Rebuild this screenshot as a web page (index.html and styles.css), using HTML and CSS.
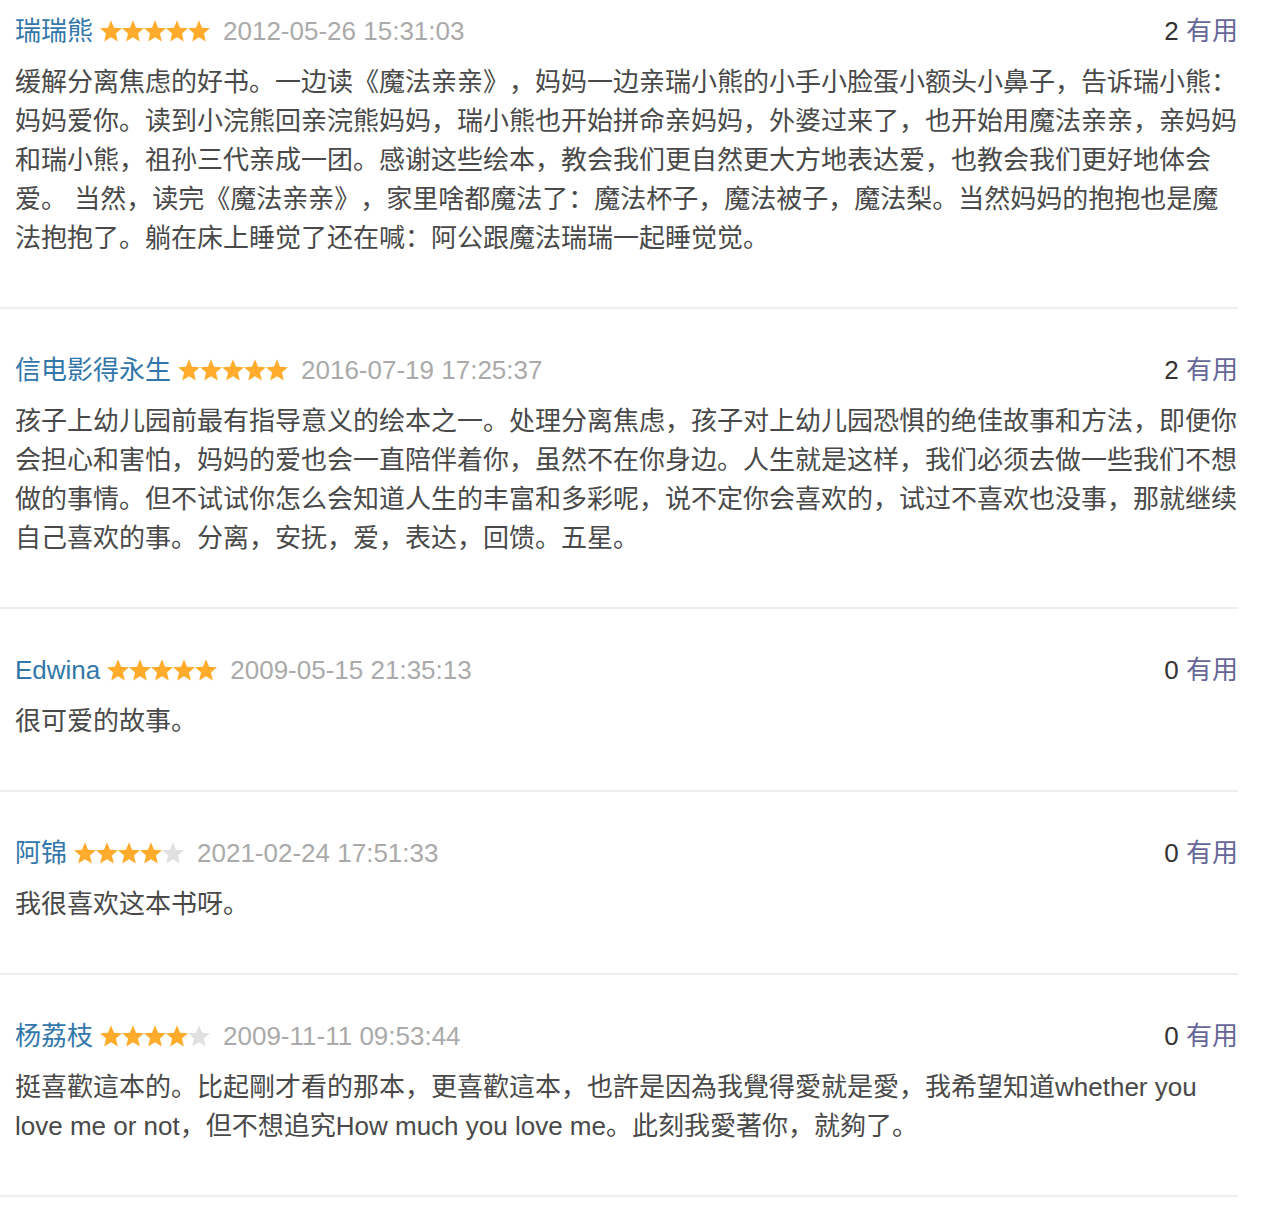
FILE: index.html
```html
<!DOCTYPE html>
<html lang="zh-CN">
<head>
<meta charset="utf-8">
<title>短评</title>
<link rel="stylesheet" href="styles.css">
</head>
<body>
<svg class="defs" width="0" height="0" aria-hidden="true">
  <defs>
    <polygon id="star" points="11,0.3 14.06,7.79 22,8.3 15.95,13.61 17.8,21.4 11,17.2 4.2,21.4 6.05,13.61 0,8.3 7.94,7.79"/>
  </defs>
</svg>
<div class="comments">
  <div class="comment">
    <div class="meta">
      <div class="who">
        <a class="name" href="#">瑞瑞熊</a>
        <span class="stars"><svg viewBox="0 0 22 22"><use href="#star"/></svg><svg viewBox="0 0 22 22"><use href="#star"/></svg><svg viewBox="0 0 22 22"><use href="#star"/></svg><svg viewBox="0 0 22 22"><use href="#star"/></svg><svg viewBox="0 0 22 22"><use href="#star"/></svg></span>
        <span class="time">2012-05-26 15:31:03</span>
      </div>
      <div class="vote"><span class="count">2</span> <a class="useful" href="#">有用</a></div>
    </div>
    <p class="text">缓解分离焦虑的好书。一边读《魔法亲亲》，妈妈一边亲瑞小熊的小手小脸蛋小额头小鼻子，告诉瑞小熊：妈妈爱你。读到小浣熊回亲浣熊妈妈，瑞小熊也开始拼命亲妈妈，外婆过来了，也开始用魔法亲亲，亲妈妈和瑞小熊，祖孙三代亲成一团。感谢这些绘本，教会我们更自然更大方地表达爱，也教会我们更好地体会爱。 当然，读完《魔法亲亲》，家里啥都魔法了：魔法杯子，魔法被子，魔法梨。当然妈妈的抱抱也是魔法抱抱了。躺在床上睡觉了还在喊：阿公跟魔法瑞瑞一起睡觉觉。</p>
  </div>

  <div class="comment">
    <div class="meta">
      <div class="who">
        <a class="name" href="#">信电影得永生</a>
        <span class="stars"><svg viewBox="0 0 22 22"><use href="#star"/></svg><svg viewBox="0 0 22 22"><use href="#star"/></svg><svg viewBox="0 0 22 22"><use href="#star"/></svg><svg viewBox="0 0 22 22"><use href="#star"/></svg><svg viewBox="0 0 22 22"><use href="#star"/></svg></span>
        <span class="time">2016-07-19 17:25:37</span>
      </div>
      <div class="vote"><span class="count">2</span> <a class="useful" href="#">有用</a></div>
    </div>
    <p class="text">孩子上幼儿园前最有指导意义的绘本之一。处理分离焦虑，孩子对上幼儿园恐惧的绝佳故事和方法，即便你会担心和害怕，妈妈的爱也会一直陪伴着你，虽然不在你身边。人生就是这样，我们必须去做一些我们不想做的事情。但不试试你怎么会知道人生的丰富和多彩呢，说不定你会喜欢的，试过不喜欢也没事，那就继续自己喜欢的事。分离，安抚，爱，表达，回馈。五星。</p>
  </div>

  <div class="comment">
    <div class="meta">
      <div class="who">
        <a class="name" href="#">Edwina</a>
        <span class="stars"><svg viewBox="0 0 22 22"><use href="#star"/></svg><svg viewBox="0 0 22 22"><use href="#star"/></svg><svg viewBox="0 0 22 22"><use href="#star"/></svg><svg viewBox="0 0 22 22"><use href="#star"/></svg><svg viewBox="0 0 22 22"><use href="#star"/></svg></span>
        <span class="time">2009-05-15 21:35:13</span>
      </div>
      <div class="vote"><span class="count">0</span> <a class="useful" href="#">有用</a></div>
    </div>
    <p class="text">很可爱的故事。</p>
  </div>

  <div class="comment">
    <div class="meta">
      <div class="who">
        <a class="name" href="#">阿锦</a>
        <span class="stars"><svg viewBox="0 0 22 22"><use href="#star"/></svg><svg viewBox="0 0 22 22"><use href="#star"/></svg><svg viewBox="0 0 22 22"><use href="#star"/></svg><svg viewBox="0 0 22 22"><use href="#star"/></svg><svg class="off" viewBox="0 0 22 22"><use href="#star"/></svg></span>
        <span class="time">2021-02-24 17:51:33</span>
      </div>
      <div class="vote"><span class="count">0</span> <a class="useful" href="#">有用</a></div>
    </div>
    <p class="text">我很喜欢这本书呀。</p>
  </div>

  <div class="comment">
    <div class="meta">
      <div class="who">
        <a class="name" href="#">杨荔枝</a>
        <span class="stars"><svg viewBox="0 0 22 22"><use href="#star"/></svg><svg viewBox="0 0 22 22"><use href="#star"/></svg><svg viewBox="0 0 22 22"><use href="#star"/></svg><svg viewBox="0 0 22 22"><use href="#star"/></svg><svg class="off" viewBox="0 0 22 22"><use href="#star"/></svg></span>
        <span class="time">2009-11-11 09:53:44</span>
      </div>
      <div class="vote"><span class="count">0</span> <a class="useful" href="#">有用</a></div>
    </div>
    <p class="text">挺喜歡這本的。比起剛才看的那本，更喜歡這本，也許是因為我覺得愛就是愛，我希望知道whether you love me or not，但不想追究How much you love me。此刻我愛著你，就夠了。</p>
  </div>
</div>
</body>
</html>
```

FILE: styles.css
```css
html, body {
  margin: 0;
  padding: 0;
  background: #fff;
}

body {
  font-family: "Liberation Sans", "Noto Sans CJK SC", sans-serif;
  font-size: 26px;
  line-height: 39px;
  color: #494949;
  text-spacing-trim: space-all;
}

.defs {
  position: absolute;
  width: 0;
  height: 0;
  overflow: hidden;
}

.comments {
  width: 1238px;
}

.comment {
  padding: 42px 0 49px 15px;
  border-bottom: 2px solid #eeeeee;
}

.comment:first-child {
  padding-top: 12px;
}

.meta {
  display: flex;
  align-items: center;
  justify-content: space-between;
  height: 39px;
}

.who {
  display: flex;
  align-items: center;
}

.name {
  color: #3377aa;
  text-decoration: none;
  margin-right: 7px;
}

.stars {
  display: flex;
  align-items: center;
  margin: 0 13px 2px 0;
}

.stars svg {
  width: 22px;
  height: 22px;
  display: block;
  fill: #ffac2d;
}

.stars svg.off {
  fill: #e1e1e1;
}

.time {
  color: #aaaaaa;
}

.vote {
  white-space: pre;
}

.count {
  color: #333333;
}

.useful {
  color: #666699;
  text-decoration: none;
}

.text {
  margin: 12px 0 0 0;
  word-wrap: break-word;
}
```
